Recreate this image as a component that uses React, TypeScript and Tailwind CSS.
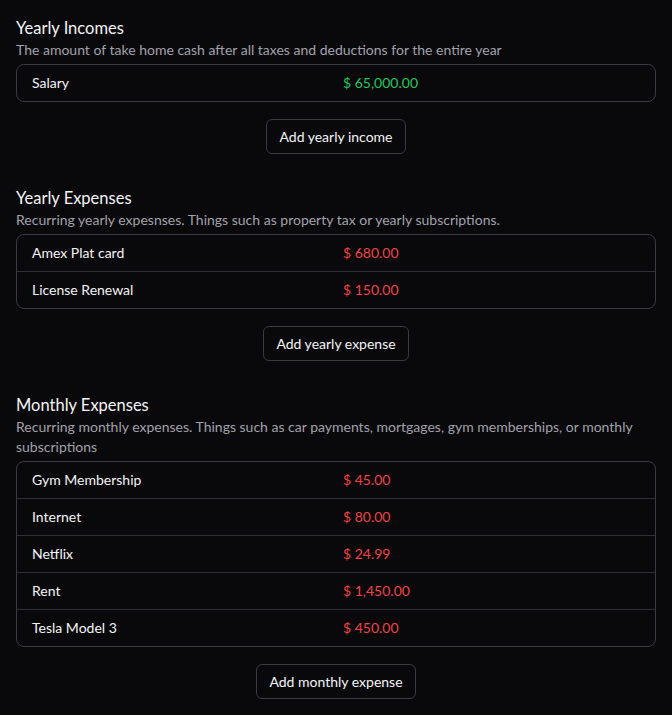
type Item = { name: string; amount: string };

const sections: {
  title: string;
  description: string;
  items: Item[];
  tone: 'income' | 'expense';
  action: string;
}[] = [
  {
    title: 'Yearly Incomes',
    description: 'The amount of take home cash after all taxes and deductions for the entire year',
    items: [{ name: 'Salary', amount: '$ 65,000.00' }],
    tone: 'income',
    action: 'Add yearly income',
  },
  {
    title: 'Yearly Expenses',
    description: 'Recurring yearly expesnses. Things such as property tax or yearly subscriptions.',
    items: [
      { name: 'Amex Plat card', amount: '$ 680.00' },
      { name: 'License Renewal', amount: '$ 150.00' },
    ],
    tone: 'expense',
    action: 'Add yearly expense',
  },
  {
    title: 'Monthly Expenses',
    description:
      'Recurring monthly expenses. Things such as car payments, mortgages, gym memberships, or monthly subscriptions',
    items: [
      { name: 'Gym Membership', amount: '$ 45.00' },
      { name: 'Internet', amount: '$ 80.00' },
      { name: 'Netflix', amount: '$ 24.99' },
      { name: 'Rent', amount: '$ 1,450.00' },
      { name: 'Tesla Model 3', amount: '$ 450.00' },
    ],
    tone: 'expense',
    action: 'Add monthly expense',
  },
];

function Section({ section }: { section: (typeof sections)[number] }) {
  return (
    <section className="flex flex-col">
      <h2 className="text-[16.5px] leading-6 text-[#f4f4f5]">{section.title}</h2>
      <p className="text-sm leading-5 text-[#a1a1aa]">{section.description}</p>
      <div className="mt-1 rounded-lg border border-[#3a3a40] divide-y divide-[#2e2e33]">
        {section.items.map((item) => (
          <div key={item.name} className="box-content flex h-9 items-center text-sm">
            <div className="w-[326px] pl-[15px] text-[#f4f4f5]">{item.name}</div>
            <div className={section.tone === 'income' ? 'text-[#22c55e]' : 'text-[#ef4444]'}>
              {item.amount}
            </div>
          </div>
        ))}
      </div>
      <div className="mt-[17px] flex justify-center">
        <button className="h-[35px] rounded-md border border-[#3a3a40] px-3 text-sm text-[#f4f4f5]">
          {section.action}
        </button>
      </div>
    </section>
  );
}

export default function App() {
  return (
    <div
      className="min-h-[715px] bg-[#09090b] px-4 pt-4 pb-4"
      style={{ fontFamily: 'Lato, "Noto Sans", sans-serif' }}
    >
      <div className="flex flex-col gap-8">
        {sections.map((section) => (
          <Section key={section.title} section={section} />
        ))}
      </div>
    </div>
  );
}
